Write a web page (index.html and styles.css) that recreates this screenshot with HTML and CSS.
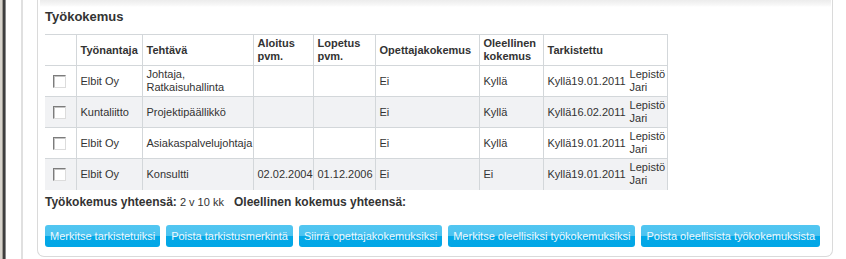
FILE: index.html
```html
<!DOCTYPE html>
<html lang="fi">
<head>
<meta charset="utf-8">
<title>Työkokemus</title>
<link rel="stylesheet" href="styles.css">
</head>
<body>
<div class="page">
  <div class="edge e1"></div>
  <div class="edge e2"></div>
  <div class="edge e3"></div>
  <div class="edge e4"></div>
  <div class="outer">
    <div class="box">
      <div class="band"></div>
      <div class="content">
        <h2 class="title">Työkokemus</h2>
        <table class="grid">
          <colgroup>
            <col class="c-check"><col class="c-emp"><col class="c-task"><col class="c-start"><col class="c-end"><col class="c-teach"><col class="c-rel"><col class="c-chk">
          </colgroup>
          <thead>
            <tr>
              <th></th>
              <th>Työnantaja</th>
              <th>Tehtävä</th>
              <th>Aloitus pvm.</th>
              <th>Lopetus pvm.</th>
              <th>Opettajakokemus</th>
              <th>Oleellinen kokemus</th>
              <th>Tarkistettu</th>
            </tr>
          </thead>
          <tbody>
            <tr>
              <td><input type="checkbox" class="cb"></td>
              <td>Elbit Oy</td>
              <td>Johtaja, Ratkaisuhallinta</td>
              <td></td>
              <td></td>
              <td>Ei</td>
              <td>Kyllä</td>
              <td><div class="checked"><span>Kyllä19.01.2011</span><span class="who">Lepistö Jari</span></div></td>
            </tr>
            <tr class="alt">
              <td><input type="checkbox" class="cb"></td>
              <td>Kuntaliitto</td>
              <td>Projektipäällikkö</td>
              <td></td>
              <td></td>
              <td>Ei</td>
              <td>Kyllä</td>
              <td><div class="checked"><span>Kyllä16.02.2011</span><span class="who">Lepistö Jari</span></div></td>
            </tr>
            <tr>
              <td><input type="checkbox" class="cb"></td>
              <td>Elbit Oy</td>
              <td>Asiakaspalvelujohtaja</td>
              <td></td>
              <td></td>
              <td>Ei</td>
              <td>Kyllä</td>
              <td><div class="checked"><span>Kyllä19.01.2011</span><span class="who">Lepistö Jari</span></div></td>
            </tr>
            <tr class="alt">
              <td><input type="checkbox" class="cb"></td>
              <td>Elbit Oy</td>
              <td>Konsultti</td>
              <td>02.02.2004</td>
              <td>01.12.2006</td>
              <td>Ei</td>
              <td>Ei</td>
              <td><div class="checked"><span>Kyllä19.01.2011</span><span class="who">Lepistö Jari</span></div></td>
            </tr>
          </tbody>
        </table>
        <div class="summary">
          <span class="lbl">Työkokemus yhteensä:</span> <span class="val">2 v 10 kk</span>
          <span class="lbl">Oleellinen kokemus yhteensä:</span>
        </div>
        <div class="actions">
          <button class="btn">Merkitse tarkistetuiksi</button>
          <button class="btn">Poista tarkistusmerkintä</button>
          <button class="btn">Siirrä opettajakokemuksiksi</button>
          <button class="btn">Merkitse oleellisiksi työkokemuksiksi</button>
          <button class="btn">Poista oleellisista työkokemuksista</button>
        </div>
      </div>
    </div>
  </div>
</div>
</body>
</html>
```

FILE: styles.css
```css
html, body {
  margin: 0;
  padding: 0;
  background: #ffffff;
}

body {
  font-family: "Liberation Sans", Arial, sans-serif;
  font-size: 11px;
  color: #333333;
}

.page {
  display: flex;
  height: 259px;
  overflow: hidden;
}

.edge { flex: none; }
.e1 { width: 2px; background: #d8d4cc; }
.e2 { width: 1px; background: #9c9890; }
.e3 { width: 2px; background: #3e3e3e; }
.e4 { width: 1px; background: #8c8c8c; }

.outer {
  flex: none;
  margin-left: 15px;
  border-left: 2px solid #e0e0e0;
  padding-left: 14px;
  display: flex;
  flex-direction: column;
}

.box {
  width: 794px;
  height: 256px;
  border: 1px solid #dadada;
  border-top: none;
  border-radius: 0 0 7px 7px;
  box-sizing: content-box;
}

.band {
  height: 7px;
  margin: 0 1px 0 2px;
  background: linear-gradient(#ececec, #f7f7f7 70%, #ffffff);
}

.content {
  padding-left: 7px;
}

.title {
  margin: 1px 0 0 0;
  font-size: 13px;
  line-height: 18px;
  font-weight: bold;
  color: #333333;
}

.grid {
  margin-top: 8px;
  border-collapse: collapse;
  table-layout: fixed;
  width: 622px;
}

.c-check { width: 31px; }
.c-emp { width: 66px; }
.c-task { width: 111px; }
.c-start { width: 60px; }
.c-end { width: 62px; }
.c-teach { width: 104px; }
.c-rel { width: 64px; }
.c-chk { width: 124px; }

.grid th,
.grid td {
  border-top: 1px solid #d3d7da;
  border-left: 1px solid #d3d7da;
  padding: 0 3px 0 4px;
  text-align: left;
  vertical-align: middle;
  line-height: 13px;
  white-space: normal;
}

.grid th:first-child,
.grid td:first-child {
  border-left: none;
  padding: 0;
}

.grid th:last-child,
.grid td:last-child {
  border-right: 1px solid #d3d7da;
}

.grid th {
  font-weight: bold;
  color: #333333;
}

.grid tr { height: 31px; }

.grid tr.alt td { background: #f1f2f4; }

.cb {
  appearance: none;
  -webkit-appearance: none;
  display: block;
  width: 13px;
  height: 13px;
  margin: 1px 0 0 8px;
  box-sizing: border-box;
  border: 1px solid;
  border-color: #7c7c7c #dcdcdc #dcdcdc #7c7c7c;
  background: #ffffff;
  box-shadow: inset 1px 1px 0 #c4c4c4;
}

.checked {
  display: flex;
  align-items: center;
  gap: 4px;
}

.who {
  width: 36px;
}

.summary {
  margin-top: 5px;
  line-height: 14px;
  white-space: nowrap;
}

.lbl {
  font-weight: bold;
  font-size: 12px;
}

.val {
  margin-right: 7px;
}

.actions {
  margin-top: 16px;
  display: flex;
  gap: 6px;
}

.btn {
  height: 22px;
  padding: 0 5px;
  border: none;
  border-radius: 3px;
  font-family: "Liberation Sans", Arial, sans-serif;
  font-size: 11px;
  color: #eef8fd;
  background: linear-gradient(#52c6f1 0%, #4cc3f0 50%, #03a8e7 50%, #02a6e6 100%);
  white-space: nowrap;
  cursor: pointer;
}
```
